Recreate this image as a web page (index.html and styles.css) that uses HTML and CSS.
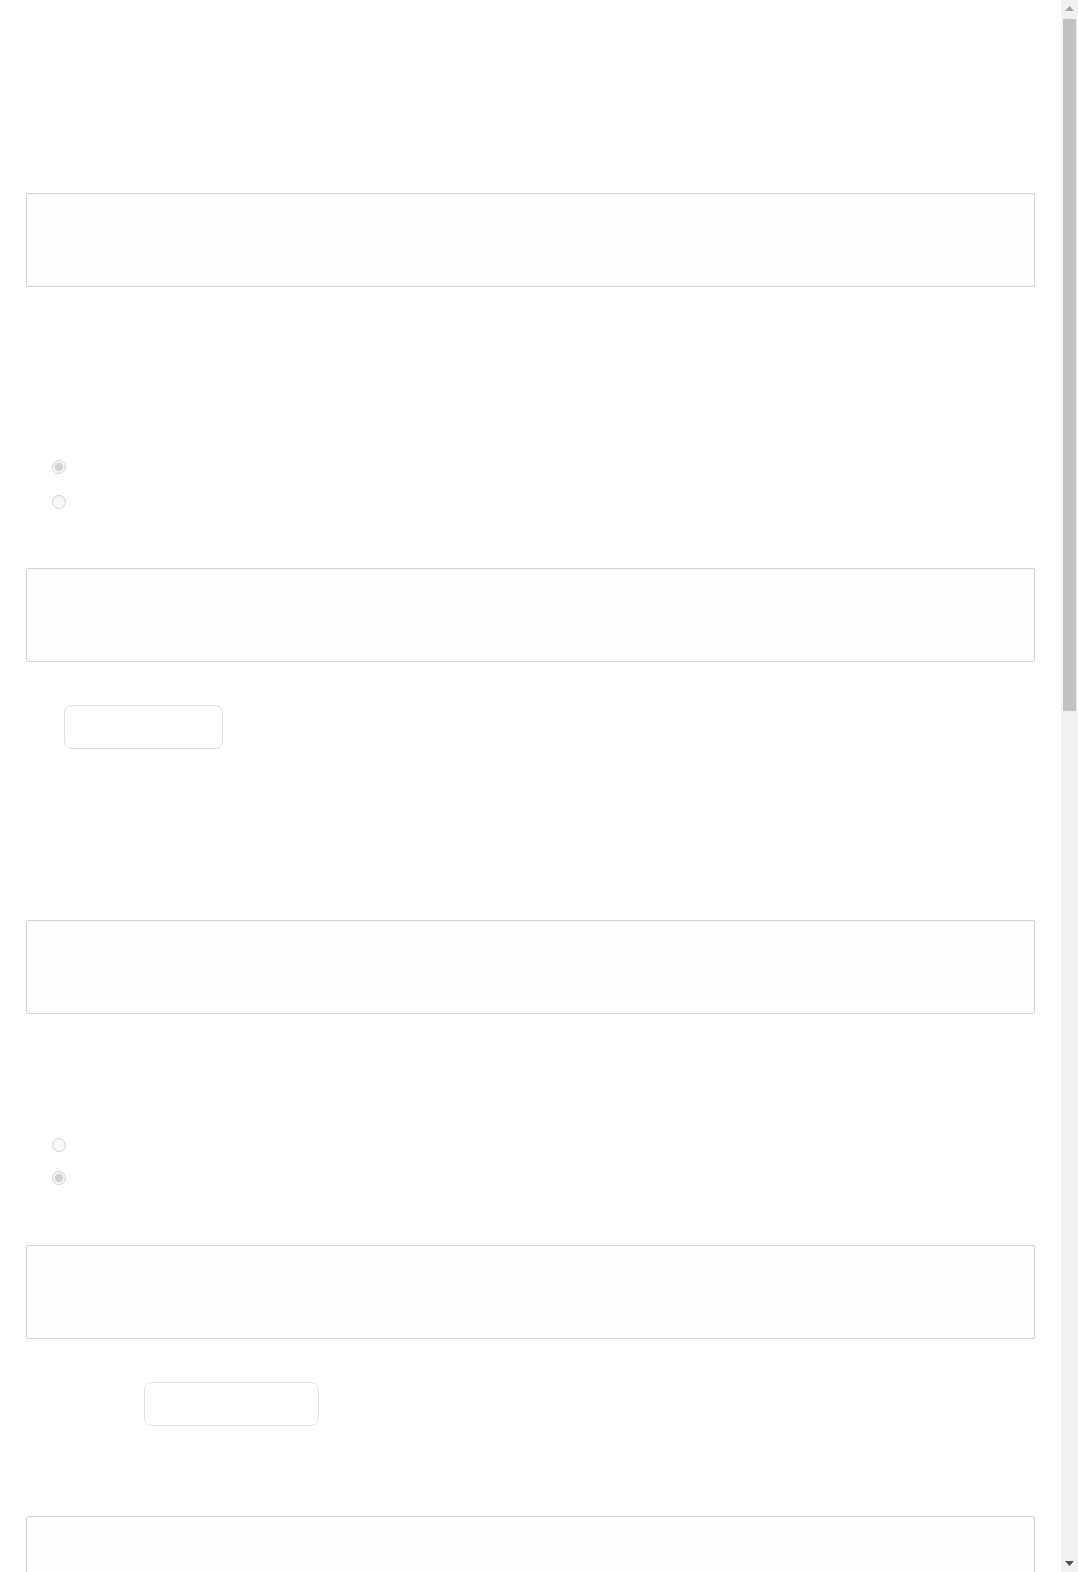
FILE: index.html
```html
<!DOCTYPE html>
<html lang="en">
<head>
<meta charset="utf-8">
<title>Form</title>
<link rel="stylesheet" href="styles.css">
</head>
<body>
<main class="page">
  <section class="block first">
    <textarea class="answer" disabled aria-label="Answer 1"></textarea>
    <div class="choices choices-a">
      <input type="radio" name="q1" disabled checked aria-label="Option 1">
      <input type="radio" name="q1" disabled aria-label="Option 2">
    </div>
    <textarea class="answer after-choices-a" disabled aria-label="Answer 2"></textarea>
    <button class="btn btn-a" type="button" disabled aria-label="Submit"></button>
  </section>
  <section class="block second">
    <textarea class="answer" disabled aria-label="Answer 3"></textarea>
    <div class="choices choices-b">
      <input type="radio" name="q2" disabled aria-label="Option 1">
      <input type="radio" name="q2" disabled checked aria-label="Option 2">
    </div>
    <textarea class="answer after-choices-b" disabled aria-label="Answer 4"></textarea>
    <button class="btn btn-b" type="button" disabled aria-label="Submit"></button>
  </section>
  <section class="block third">
    <textarea class="answer" disabled aria-label="Answer 5"></textarea>
  </section>
</main>
<div class="scrollbar" aria-hidden="true">
  <div class="sb-btn">
    <svg width="9" height="5" viewBox="0 0 9 5"><polygon points="4.5,0 9,5 0,5" fill="#a3a3a3"/></svg>
  </div>
  <div class="sb-track"><div class="sb-thumb"></div></div>
  <div class="sb-btn">
    <svg width="9" height="5" viewBox="0 0 9 5"><polygon points="0,0 9,0 4.5,5" fill="#505050"/></svg>
  </div>
</div>
</body>
</html>
```

FILE: styles.css
```css
html, body {
  margin: 0;
  padding: 0;
  background: #ffffff;
}

body {
  font-family: "Liberation Sans", Arial, sans-serif;
  color: #ffffff;
}

.page {
  padding: 193px 43px 1890px 26px;
}

.block {
  display: flex;
  flex-direction: column;
  align-items: flex-start;
}

.second {
  margin-top: 171px;
}

.third {
  margin-top: 90px;
}

.answer {
  display: block;
  box-sizing: border-box;
  width: 1009px;
  height: 94px;
  margin: 0;
  padding: 0;
  border: 1px solid #ccd1d9;
  border-radius: 2px;
  background: #fefefe;
  resize: none;
  font: inherit;
}

.choices {
  display: flex;
  flex-direction: column;
  padding-left: 26px;
}

.choices input {
  width: 14px;
  height: 14px;
  margin: 0;
}

.choices-a {
  margin-top: 173px;
  gap: 21px;
}

.choices-b {
  margin-top: 124px;
  gap: 19px;
}

.after-choices-a {
  margin-top: 59px;
}

.after-choices-b {
  margin-top: 60px;
}

.btn {
  box-sizing: border-box;
  height: 44px;
  margin-top: 43px;
  border: 1px solid #dedede;
  border-radius: 8px;
  background: #ffffff;
  padding: 0;
}

.btn-a {
  margin-left: 38px;
  width: 159px;
}

.btn-b {
  margin-left: 118px;
  width: 175px;
}

/* browser scrollbar as drawn in the capture */
.scrollbar {
  position: fixed;
  top: 0;
  right: 0;
  bottom: 0;
  width: 17px;
  display: flex;
  flex-direction: column;
  background: #f1f1f1;
}

.sb-btn {
  height: 17px;
  flex: none;
  display: flex;
  align-items: center;
  justify-content: center;
}

.sb-track {
  flex: 1;
  padding: 2px 2px 0 2px;
}

.sb-thumb {
  height: 692px;
  background: #c1c1c1;
}
```
